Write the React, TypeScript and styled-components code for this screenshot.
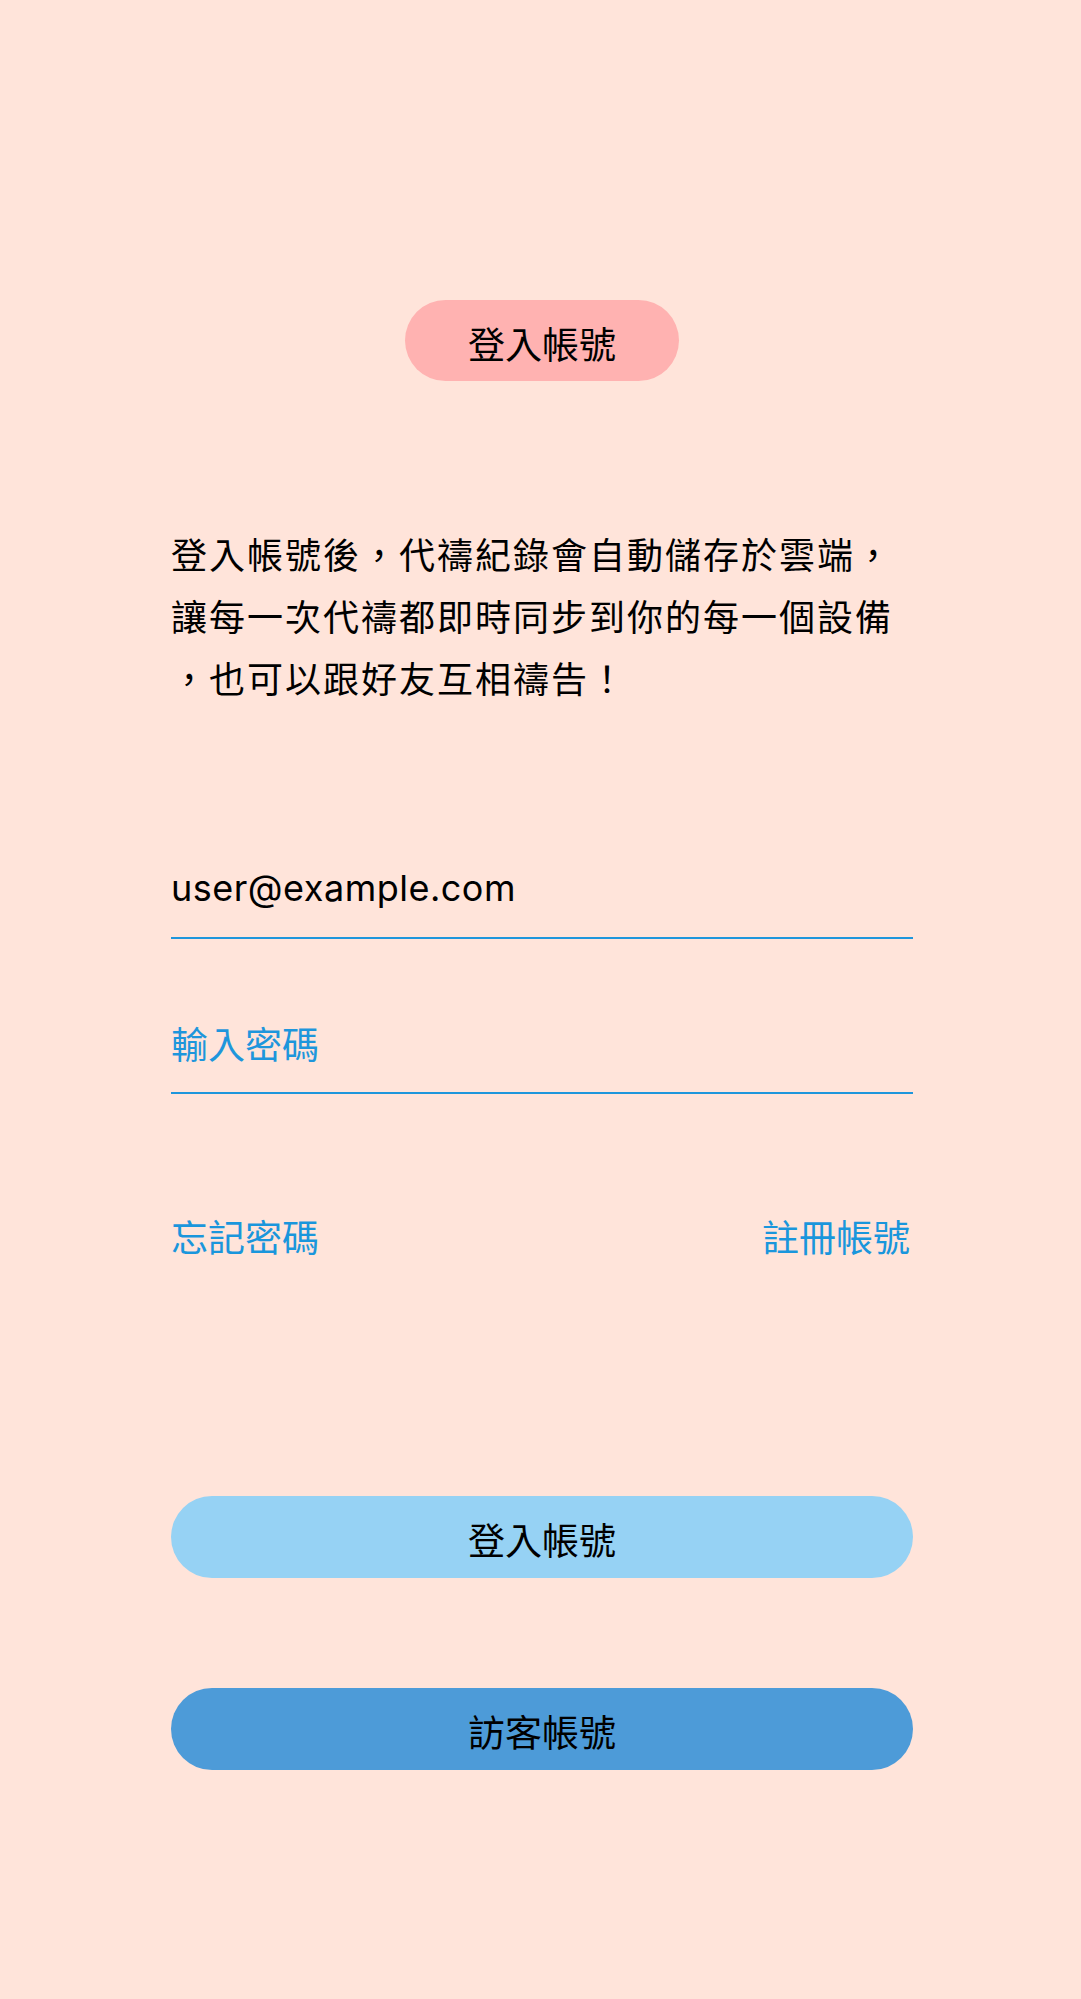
import React from "react";
import styled, { createGlobalStyle } from "styled-components";

const Global = createGlobalStyle`
  html, body {
    margin: 0;
    padding: 0;
    background: #ffe4da;
  }
  body {
    font-family: "Noto Sans CJK TC", "Noto Sans", sans-serif;
    color: #000;
  }
`;

const Page = styled.main`
  min-height: 1999px;
  box-sizing: border-box;
  padding: 300px 168px 0 171px;
  display: flex;
  flex-direction: column;
  align-items: stretch;
`;

const Pill = styled.button<{ $bg: string; $wide?: boolean }>`
  appearance: none;
  border: none;
  background: ${(p) => p.$bg};
  height: ${(p) => (p.$wide ? "82px" : "81px")};
  width: ${(p) => (p.$wide ? "100%" : "274px")};
  align-self: center;
  border-radius: 41px;
  font-family: "Noto Sans CJK TC", sans-serif;
  font-size: 37px;
  color: #000;
  display: flex;
  align-items: center;
  justify-content: center;
  padding: 4px 0 0 0;
  cursor: pointer;
`;

const Intro = styled.p`
  margin: 141px 0 0 0;
  font-size: 36px;
  letter-spacing: 2px;
  line-height: 62px;
  line-break: anywhere;
`;

const Field = styled.div<{ $top: number }>`
  margin-top: ${(p) => p.$top}px;
  height: 74px;
  border-bottom: 2px solid #1e96dc;
  display: flex;
  align-items: flex-start;
`;

const Input = styled.input<{ $latin?: boolean }>`
  appearance: none;
  border: none;
  outline: none;
  background: transparent;
  padding: 0;
  margin: 0;
  width: 100%;
  height: 50px;
  font-family: ${(p) =>
    p.$latin ? `Inter, "Noto Sans", sans-serif` : `"Noto Sans CJK TC", sans-serif`};
  font-size: ${(p) => (p.$latin ? "36px" : "37px")};
  letter-spacing: ${(p) => (p.$latin ? "0.5px" : "0")};
  color: #000;
  &::placeholder {
    color: #1e96dc;
    opacity: 1;
  }
`;

const LinkRow = styled.div`
  margin-top: 117px;
  padding-right: 3px;
  display: flex;
  justify-content: space-between;
  align-items: center;
  height: 50px;
`;

const TextLink = styled.a`
  font-size: 37px;
  color: #1a96dc;
  text-decoration: none;
  cursor: pointer;
`;

const Actions = styled.div`
  margin-top: 235px;
  display: flex;
  flex-direction: column;
  gap: 110px;
`;

export default function App() {
  return (
    <>
      <Global />
      <Page>
        <Pill $bg="#ffb2b1">登入帳號</Pill>
        <Intro>
          登入帳號後，代禱紀錄會自動儲存於雲端，讓每一次代禱都即時同步到你的每一個設備，也可以跟好友互相禱告！
        </Intro>
        <Field $top={155}>
          <Input $latin type="email" defaultValue="user@example.com" />
        </Field>
        <Field $top={79}>
          <Input type="password" placeholder="輸入密碼" />
        </Field>
        <LinkRow>
          <TextLink>忘記密碼</TextLink>
          <TextLink>註冊帳號</TextLink>
        </LinkRow>
        <Actions>
          <Pill $bg="#96d2f4" $wide>
            登入帳號
          </Pill>
          <Pill $bg="#4d9bd8" $wide>
            訪客帳號
          </Pill>
        </Actions>
      </Page>
    </>
  );
}
